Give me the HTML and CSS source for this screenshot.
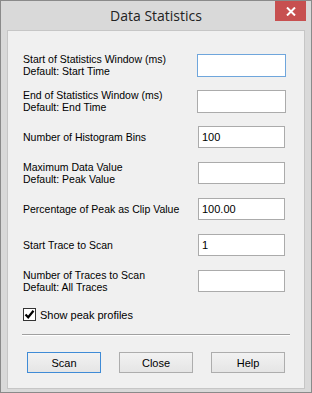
FILE: index.html
```html
<!DOCTYPE html>
<html lang="en">
<head>
    <meta charset="UTF-8">
    <meta name="viewport" content="width=device-width, initial-scale=1.0">
    <title>Data Statistics</title>
    <link rel="stylesheet" href="styles.css">
</head>
<body>

<div class="window">
    <div class="titlebar">
        <span class="title">Data Statistics</span>
        <div class="close-btn">
            <svg width="10" height="9" viewBox="0 0 10 9">
                <path d="M1 0.5 L9 8.5 M9 0.5 L1 8.5" stroke="#fff" stroke-width="2"/>
            </svg>
        </div>
    </div>

    <div class="client">
        <div class="row">
            <label for="startWin">Start of Statistics Window (ms)<br>Default: Start Time</label>
            <input type="text" id="startWin" class="wide focused">
        </div>
        <div class="row">
            <label for="endWin">End of Statistics Window (ms)<br>Default: End Time</label>
            <input type="text" id="endWin" class="wide">
        </div>
        <div class="row">
            <label for="bins">Number of Histogram Bins</label>
            <input type="text" id="bins" value="100">
        </div>
        <div class="row">
            <label for="maxVal">Maximum Data Value<br>Default: Peak Value</label>
            <input type="text" id="maxVal">
        </div>
        <div class="row">
            <label for="clip">Percentage of Peak as Clip Value</label>
            <input type="text" id="clip" value="100.00">
        </div>
        <div class="row">
            <label for="startTrace">Start Trace to Scan</label>
            <input type="text" id="startTrace" value="1">
        </div>
        <div class="row">
            <label for="numTraces">Number of Traces to Scan<br>Default: All Traces</label>
            <input type="text" id="numTraces">
        </div>

        <div class="check-row">
            <span class="checkbox">
                <svg width="11" height="11" viewBox="0 0 11 11">
                    <path d="M1.5 5.5 L4.2 8.3 L9.5 1.8" fill="none" stroke="#000" stroke-width="2.2"/>
                </svg>
            </span>
            <span>Show peak profiles</span>
        </div>

        <div class="separator"></div>

        <div class="buttons">
            <button class="default">Scan</button>
            <button>Close</button>
            <button>Help</button>
        </div>
    </div>
</div>

</body>
</html>
```
FILE: styles.css
```css
body {
    margin: 0;
    padding: 0;
    background-color: #fff;
    font-family: 'Liberation Sans', Arial, sans-serif;
    font-size: 10.5px;
    color: #000;
}

.window {
    position: relative;
    width: 310px;
    height: 391px;
    border: 1px solid #8a8a8a;
    background-color: #d9d9d9;
    display: flex;
    flex-direction: column;
}

.titlebar {
    height: 29px;
    display: flex;
    justify-content: center;
    align-items: center;
}

.title {
    font-family: 'Open Sans', 'Noto Sans', sans-serif;
    font-size: 14px;
    color: #222;
    margin-top: -1px;
}

.close-btn {
    position: absolute;
    top: 0;
    right: 5px;
    width: 31px;
    height: 20px;
    background-color: #c75050;
    display: flex;
    justify-content: center;
    align-items: center;
}

.client {
    margin: 0 6px 3px 6px;
    flex: 1;
    background-color: #f0f0f0;
    border: 1px solid #c6c6c6;
    padding-top: 16px;
}

.row {
    height: 36px;
    display: flex;
    align-items: center;
    justify-content: space-between;
    padding: 0 19px 0 15px;
}

.row label {
    line-height: 12px;
}

input {
    width: 87px;
    height: 22px;
    box-sizing: border-box;
    border: 1px solid #ababab;
    background-color: #fff;
    padding: 0 3px;
    margin: 0;
    font-family: 'Liberation Sans', Arial, sans-serif;
    font-size: 11px;
    color: #000;
    outline: none;
}

input.wide {
    width: 89px;
    height: 23px;
    margin-right: -1px;
}

input.focused {
    border-color: #6fa6dc;
}

.check-row {
    display: flex;
    align-items: center;
    margin: 9px 0 0 15px;
    font-size: 11px;
}

.checkbox {
    width: 11px;
    height: 11px;
    border: 1px solid #333;
    background-color: #fff;
    margin-right: 4px;
    display: flex;
}

.separator {
    margin: 13px 0 0 14px;
    width: 268px;
    height: 1px;
    background-color: #a0a0a0;
    border-bottom: 1px solid #fff;
}

.buttons {
    display: flex;
    gap: 18px;
    margin: 16px 0 0 19px;
}

button {
    width: 74px;
    height: 21px;
    border: 1px solid #adadad;
    background: linear-gradient(#f2f2f2, #e5e5e5);
    font-family: 'Liberation Sans', Arial, sans-serif;
    font-size: 11px;
    color: #000;
    padding: 0;
}

button.default {
    border-color: #3f8bd6;
}
```
